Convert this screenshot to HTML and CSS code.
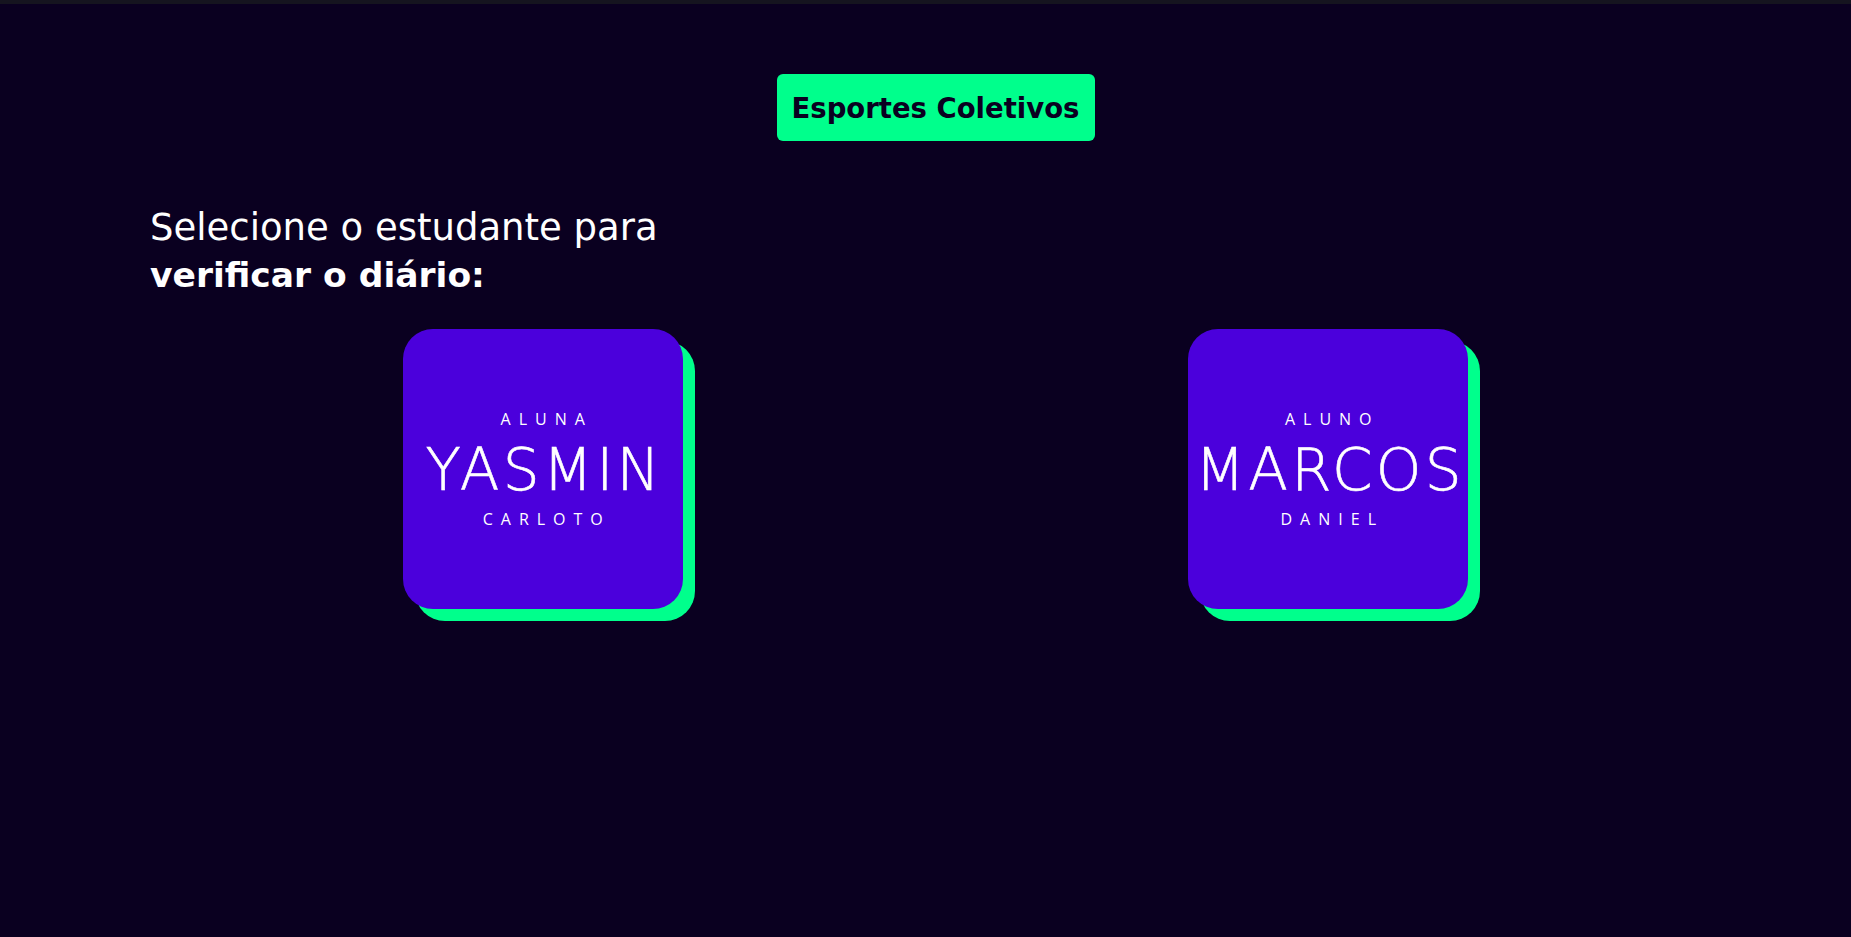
FILE: index.html
```html
<!DOCTYPE html>
<html lang="pt-BR">
<head>
<meta charset="utf-8">
<title>Esportes Coletivos</title>
<link rel="stylesheet" href="styles.css">
</head>
<body>
<div class="topbar"></div>
<main class="page">
  <div class="title-wrap">
    <h1 class="badge">Esportes Coletivos</h1>
  </div>
  <h2 class="prompt">Selecione o estudante para<br><strong>verificar o diário:</strong></h2>
  <div class="cards">
    <a class="card" href="#">
      <span class="role">ALUNA</span>
      <span class="name">YASMIN</span>
      <span class="surname">CARLOTO</span>
    </a>
    <a class="card" href="#">
      <span class="role">ALUNO</span>
      <span class="name">MARCOS</span>
      <span class="surname">DANIEL</span>
    </a>
  </div>
</main>
</body>
</html>
```
FILE: styles.css
```css
html, body {
  margin: 0;
  padding: 0;
}
body {
  background: #0a0020;
  min-height: 100vh;
  font-family: "DejaVu Sans", "Liberation Sans", sans-serif;
  color: #ffffff;
}
.topbar {
  height: 4px;
  background: #15141f;
}
.page {
  padding: 0 130px 0 150px;
}
.title-wrap {
  display: flex;
  justify-content: center;
  padding-top: 70px;
}
.badge {
  margin: 0;
  background: #00ff8c;
  color: #0a0020;
  border-radius: 6px;
  height: 67px;
  width: 318px;
  display: flex;
  align-items: center;
  justify-content: center;
  font-size: 27.5px;
  font-weight: 700;
}
.prompt {
  margin: 63px 0 0;
  font-size: 37px;
  line-height: 47px;
  font-weight: 400;
}
.prompt strong {
  font-weight: 700;
  font-size: 34.5px;
}
.cards {
  display: flex;
  justify-content: space-around;
  margin-top: 30px;
}
.card {
  width: 280px;
  height: 280px;
  border-radius: 30px;
  background: #4b00dc;
  box-shadow: 12px 12px 0 #00ff8c;
  display: flex;
  flex-direction: column;
  align-items: center;
  justify-content: center;
  text-decoration: none;
  color: #ffffff;
}
.role, .surname {
  font-family: "Open Sans", sans-serif;
  font-size: 16px;
  letter-spacing: 8px;
  padding-left: 8px;
  line-height: 22px;
}
.name {
  font-family: "DejaVu Sans", sans-serif;
  font-weight: 200;
  font-size: 58px;
  line-height: 75px;
  padding-top: 3px;
  letter-spacing: 3.3px;
  padding-left: 3.3px;
  -webkit-text-stroke: 0.6px #ffffff;
}
```
